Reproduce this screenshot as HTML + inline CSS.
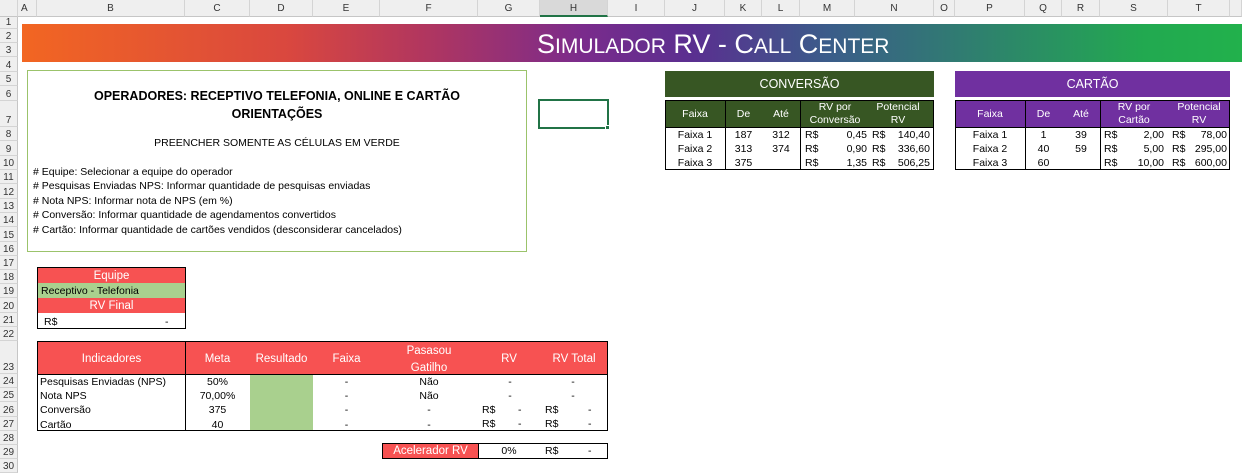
<!DOCTYPE html><html><head><meta charset="utf-8"><style>
body{margin:0;width:1242px;height:469px;overflow:hidden;background:#fff;font-family:"Liberation Sans Narrow","Liberation Sans",sans-serif;font-size:10.5px;color:#000;position:relative}
div{position:absolute;box-sizing:border-box}
.ch{top:0;height:17px;background:#efefef;border-right:1px solid #d4d4d4;border-bottom:1px solid #c6c6c6;text-align:center;line-height:17px;font-size:10px;color:#333}
.rh{left:0;width:18px;background:#efefef;border-bottom:1px solid #d4d4d4;border-right:1px solid #c6c6c6;text-align:center;font-size:10px;color:#333;display:flex;align-items:flex-end;justify-content:center;padding-bottom:0}
.c{text-align:center}
.r{text-align:right}
.red{background:#f75252;color:#fff}
</style></head><body>
<div class="ch" style="left:0;width:18px"></div>
<div class="ch" style="left:18px;width:19px;text-align:left;padding-left:3px">A</div>
<div class="ch" style="left:37px;width:148px">B</div>
<div class="ch" style="left:185px;width:65px">C</div>
<div class="ch" style="left:250px;width:63px">D</div>
<div class="ch" style="left:313px;width:67px">E</div>
<div class="ch" style="left:380px;width:98px">F</div>
<div class="ch" style="left:478px;width:62px">G</div>
<div class="ch" style="left:540px;width:68px;background:#d9d9d9;border-bottom:2px solid #217346">H</div>
<div class="ch" style="left:608px;width:57px">I</div>
<div class="ch" style="left:665px;width:60px">J</div>
<div class="ch" style="left:725px;width:37px">K</div>
<div class="ch" style="left:762px;width:38px">L</div>
<div class="ch" style="left:800px;width:55px">M</div>
<div class="ch" style="left:855px;width:79px">N</div>
<div class="ch" style="left:934px;width:21px">O</div>
<div class="ch" style="left:955px;width:70px">P</div>
<div class="ch" style="left:1025px;width:37px">Q</div>
<div class="ch" style="left:1062px;width:38px">R</div>
<div class="ch" style="left:1100px;width:68px">S</div>
<div class="ch" style="left:1168px;width:62px">T</div>
<div class="ch" style="left:1230px;width:12px"></div>
<div class="rh" style="top:17px;height:12px">1</div>
<div class="rh" style="top:29px;height:14px">2</div>
<div class="rh" style="top:43px;height:14px">3</div>
<div class="rh" style="top:57px;height:15px">4</div>
<div class="rh" style="top:72px;height:14px">5</div>
<div class="rh" style="top:86px;height:15px">6</div>
<div class="rh" style="top:101px;height:26px">7</div>
<div class="rh" style="top:127px;height:14px">8</div>
<div class="rh" style="top:141px;height:15px">9</div>
<div class="rh" style="top:156px;height:14px">10</div>
<div class="rh" style="top:170px;height:14px">11</div>
<div class="rh" style="top:184px;height:15px">12</div>
<div class="rh" style="top:199px;height:14px">13</div>
<div class="rh" style="top:213px;height:14px">14</div>
<div class="rh" style="top:227px;height:15px">15</div>
<div class="rh" style="top:242px;height:14px">16</div>
<div class="rh" style="top:256px;height:14px">17</div>
<div class="rh" style="top:270px;height:14px">18</div>
<div class="rh" style="top:284px;height:14px">19</div>
<div class="rh" style="top:298px;height:15px">20</div>
<div class="rh" style="top:313px;height:14px">21</div>
<div class="rh" style="top:327px;height:14px">22</div>
<div class="rh" style="top:341px;height:33px">23</div>
<div class="rh" style="top:374px;height:14px">24</div>
<div class="rh" style="top:388px;height:14px">25</div>
<div class="rh" style="top:402px;height:15px">26</div>
<div class="rh" style="top:417px;height:14px">27</div>
<div class="rh" style="top:431px;height:14px">28</div>
<div class="rh" style="top:445px;height:14px">29</div>
<div class="rh" style="top:459px;height:14px">30</div>

<div style="left:22px;top:24px;width:1220px;height:38px;background:linear-gradient(90deg,#f26622 0%,#d9473f 22%,#b1365f 33%,#7a2b8c 46%,#5a2f90 55%,#3b5c8a 66%,#2f7f6f 78%,#22a950 92%,#22b14c 100%)"></div>
<div style="left:537px;top:26px;color:#fff;font-size:27px;line-height:36px;white-space:nowrap">S<span style="font-size:21px">IMULADOR</span> RV - C<span style="font-size:21px">ALL</span> C<span style="font-size:21px">ENTER</span></div>

<div style="left:27px;top:70px;width:500px;height:182px;border:1px solid #9bc36b"></div>
<div class="c" style="left:27px;top:87px;width:500px;font-weight:bold;font-size:12.5px;line-height:18px">OPERADORES: RECEPTIVO TELEFONIA, ONLINE E CARTÃO<br>ORIENTAÇÕES</div>
<div class="c" style="left:27px;top:137px;width:500px;font-size:10.5px">PREENCHER SOMENTE AS CÉLULAS EM VERDE</div>
<div style="left:33px;top:165px;width:490px;font-size:10.5px;line-height:14.4px">
# Equipe: Selecionar a equipe do operador<br>
# Pesquisas Enviadas NPS: Informar quantidade de pesquisas enviadas<br>
# Nota NPS: Informar nota de NPS (em %)<br>
# Conversão: Informar quantidade de agendamentos convertidos<br>
# Cartão: Informar quantidade de cartões vendidos (desconsiderar cancelados)</div>

<div style="left:538px;top:99px;width:71px;height:30px;border:2px solid #217346"></div>
<div style="left:605px;top:125px;width:5px;height:5px;background:#217346;border:1px solid #fff"></div>

<div class="c" style="left:665px;top:71px;width:269px;height:26px;background:#375623;color:#fff;font-size:12.5px;line-height:26px">CONVERSÃO</div>
<div style="left:665px;top:100px;width:269px;height:70px;border:1px solid #000"></div>
<div style="left:666px;top:101px;width:267px;height:26px;background:#375623"></div>
<div style="left:725px;top:100px;width:1px;height:70px;background:#000"></div>
<div style="left:800px;top:100px;width:1px;height:70px;background:#000"></div>
<div style="left:665px;top:127px;width:269px;height:1px;background:#000"></div>
<div class="c" style="left:665px;top:108px;width:60px;color:#fff">Faixa</div>
<div class="c" style="left:725px;top:108px;width:37px;color:#fff">De</div>
<div class="c" style="left:762px;top:108px;width:38px;color:#fff">Até</div>
<div class="c" style="left:800px;top:101px;width:70px;color:#fff;line-height:13px">RV por<br>Conversão</div>
<div class="c" style="left:862px;top:101px;width:72px;color:#fff;line-height:13px">Potencial<br>RV</div>

<div class="c" style="left:955px;top:71px;width:275px;height:26px;background:#7030a0;color:#fff;font-size:12.5px;line-height:26px">CARTÃO</div>
<div style="left:955px;top:100px;width:275px;height:70px;border:1px solid #000"></div>
<div style="left:956px;top:101px;width:273px;height:26px;background:#7030a0"></div>
<div style="left:1025px;top:100px;width:1px;height:70px;background:#000"></div>
<div style="left:1100px;top:100px;width:1px;height:70px;background:#000"></div>
<div style="left:955px;top:127px;width:275px;height:1px;background:#000"></div>
<div class="c" style="left:955px;top:108px;width:70px;color:#fff">Faixa</div>
<div class="c" style="left:1025px;top:108px;width:37px;color:#fff">De</div>
<div class="c" style="left:1062px;top:108px;width:38px;color:#fff">Até</div>
<div class="c" style="left:1100px;top:101px;width:68px;color:#fff;line-height:13px">RV por<br>Cartão</div>
<div class="c" style="left:1168px;top:101px;width:62px;color:#fff;line-height:13px">Potencial<br>RV</div>

<div style="left:665px;top:128px;width:570px;line-height:14px">
<div class="c" style="left:0;width:60px">Faixa 1<br>Faixa 2<br>Faixa 3</div>
<div class="c" style="left:60px;width:37px">187<br>313<br>375</div>
<div class="c" style="left:97px;width:38px">312<br>374</div>
<div style="left:140px;width:20px">R$<br>R$<br>R$</div>
<div class="r" style="left:150px;width:52px">0,45<br>0,90<br>1,35</div>
<div style="left:207px;width:20px">R$<br>R$<br>R$</div>
<div class="r" style="left:215px;width:50px">140,40<br>336,60<br>506,25</div>
<div class="c" style="left:290px;width:70px">Faixa 1<br>Faixa 2<br>Faixa 3</div>
<div class="c" style="left:360px;width:37px">1<br>40<br>60</div>
<div class="c" style="left:397px;width:38px">39<br>59</div>
<div style="left:439px;width:20px">R$<br>R$<br>R$</div>
<div class="r" style="left:450px;width:49px">2,00<br>5,00<br>10,00</div>
<div style="left:507px;width:20px">R$<br>R$<br>R$</div>
<div class="r" style="left:515px;width:47px">78,00<br>295,00<br>600,00</div>
</div>

<div style="left:37px;top:267px;width:149px;height:62px;border:1px solid #000"></div>
<div class="c red" style="left:38px;top:268px;width:147px;height:15px;font-size:11.5px;line-height:17px">Equipe</div>
<div style="left:38px;top:283px;width:147px;height:15px;background:#a9d08e;padding-left:3px;line-height:16px">Receptivo - Telefonia</div>
<div class="c red" style="left:38px;top:298px;width:147px;height:15px;font-size:11.5px;line-height:17px">RV Final</div>
<div style="left:44px;top:315px;line-height:14px">R$</div>
<div style="left:165px;top:315px;line-height:14px">-</div>

<div style="left:37px;top:341px;width:571px;height:90px;border:1px solid #000"></div>
<div class="red" style="left:38px;top:342px;width:569px;height:32px"></div>
<div style="left:185px;top:341px;width:1px;height:90px;background:#000"></div>
<div style="left:37px;top:374px;width:571px;height:1px;background:#000"></div>
<div style="left:250px;top:375px;width:63px;height:55px;background:#a9d08e"></div>
<div class="c" style="left:38px;top:353px;width:147px;color:#fff;font-size:11.5px">Indicadores</div>
<div class="c" style="left:185px;top:353px;width:65px;color:#fff;font-size:11.5px">Meta</div>
<div class="c" style="left:250px;top:353px;width:63px;color:#fff;font-size:11.5px">Resultado</div>
<div class="c" style="left:313px;top:353px;width:67px;color:#fff;font-size:11.5px">Faixa</div>
<div class="c" style="left:380px;top:343px;width:98px;color:#fff;font-size:11.5px;line-height:17px">Pasasou<br>Gatilho</div>
<div class="c" style="left:478px;top:353px;width:62px;color:#fff;font-size:11.5px">RV</div>
<div class="c" style="left:540px;top:353px;width:68px;color:#fff;font-size:11.5px">RV Total</div>
<div style="left:40px;top:375px;line-height:14.2px">Pesquisas Enviadas (NPS)<br>Nota NPS<br>Conversão<br>Cartão</div>
<div class="c" style="left:185px;top:375px;width:65px;line-height:14.2px">50%<br>70,00%<br>375<br>40</div>
<div class="c" style="left:313px;top:375px;width:67px;line-height:14.2px">-<br>-<br>-<br>-</div>
<div class="c" style="left:380px;top:375px;width:98px;line-height:14.2px">Não<br>Não<br>-<br>-</div>
<div class="c" style="left:500px;top:375px;width:20px;line-height:14.2px">-<br>-</div>
<div style="left:482px;top:403px;line-height:14.2px">R$<br>R$</div>
<div style="left:518px;top:403px;line-height:14.2px">-<br>-</div>
<div class="c" style="left:563px;top:375px;width:20px;line-height:14.2px">-<br>-</div>
<div style="left:545px;top:403px;line-height:14.2px">R$<br>R$</div>
<div style="left:588px;top:403px;line-height:14.2px">-<br>-</div>

<div style="left:382px;top:443px;width:226px;height:16px;border:1px solid #000"></div>
<div class="c red" style="left:383px;top:444px;width:95px;height:14px;font-size:11.5px;line-height:15px">Acelerador RV</div>
<div style="left:478px;top:443px;width:1px;height:16px;background:#000"></div>
<div class="c" style="left:478px;top:444px;width:62px;line-height:15px">0%</div>
<div style="left:545px;top:444px;line-height:15px">R$</div>
<div style="left:588px;top:444px;line-height:15px">-</div>
</body></html>
